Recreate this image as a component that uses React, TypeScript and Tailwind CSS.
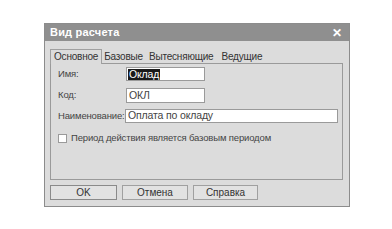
import React from "react";

export default function App() {
  const font = { fontFamily: '"Liberation Sans", Arial, sans-serif' };
  return (
    <div className="w-[392px] h-[229px] bg-white relative overflow-hidden" style={font}>
      <div className="ml-[44px] mt-[23px] w-[306px] h-[184px] bg-[#dcdcdc] border border-[#8c8c8c] flex flex-col">
        <div className="h-[17px] bg-[#8f8f8f] flex items-center justify-between px-[5px]">
          <span className="text-white text-[11px] font-bold leading-none tracking-[0.2px]">Вид расчета</span>
          <span className="text-white text-[12px] font-bold leading-none mr-[2px]">✕</span>
        </div>
        <div className="flex flex-col pl-[5px] pr-[6px] pt-[7px]">
          <div className="flex items-end h-[15px] text-[10px] tracking-[-0.2px] text-[#333] leading-none">
            <div className="h-[15px] px-[3px] flex items-center bg-[#dcdcdc] border-t border-l border-r border-[#a0a0a0] relative z-10 -mb-px">
              Основное
            </div>
            <div className="px-[2px] flex items-center h-[13px]">Базовые</div>
            <div className="px-[2px] flex items-center h-[13px] ml-[2px]">Вытесняющие</div>
            <div className="px-[2px] flex items-center h-[13px] ml-[4px]">Ведущие</div>
          </div>
          <div className="h-[117px] border border-[#9a9a9a] flex flex-col pl-[7px] pr-[4px] pt-[3px] text-[9.5px] tracking-[-0.15px] text-[#444]">
            <div className="flex items-center h-[14px]">
              <span className="w-[68px]">Имя:</span>
              <div className="w-[79px] h-[14px] bg-white border border-[#9a9a9a] flex items-center pl-[1px] text-[10.5px]">
                <span className="bg-[#1a1a1a] text-white leading-[11px] px-[1px]">Оклад</span>
              </div>
            </div>
            <div className="flex items-center h-[15px] mt-[7px]">
              <span className="w-[68px]">Код:</span>
              <div className="w-[79px] h-[15px] bg-white border border-[#9a9a9a] flex items-center pl-[2px] text-[10.5px]">
                ОКЛ
              </div>
            </div>
            <div className="flex items-center h-[14px] mt-[6px]">
              <span className="w-[67px] whitespace-nowrap">Наименование:</span>
              <div className="flex-1 h-[14px] bg-white border border-[#9a9a9a] flex items-center pl-[2px] text-[10.5px]">
                Оплата по окладу
              </div>
            </div>
            <div className="flex items-center mt-[8px]">
              <div className="w-[9px] h-[9px] bg-white border border-[#9a9a9a] mr-[4px]"></div>
              <span className="whitespace-nowrap">Период действия является базовым периодом</span>
            </div>
          </div>
          <div className="flex gap-[5px] mt-[5px] text-[10px] text-[#333]">
            <div className="w-[67px] h-[15px] border border-[#8a8a8a] bg-[#e2e2e2] flex items-center justify-center">OK</div>
            <div className="w-[66px] h-[15px] border border-[#a0a0a0] bg-[#e2e2e2] flex items-center justify-center">Отмена</div>
            <div className="w-[65px] h-[15px] border border-[#a0a0a0] bg-[#e2e2e2] flex items-center justify-center">Справка</div>
          </div>
        </div>
      </div>
    </div>
  );
}
